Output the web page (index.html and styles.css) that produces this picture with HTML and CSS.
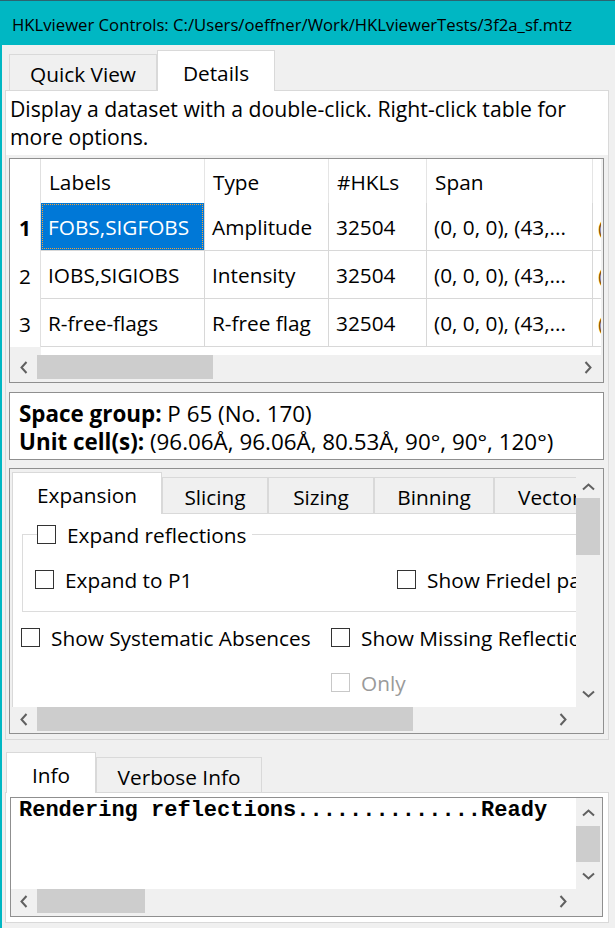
FILE: index.html
```html
<!DOCTYPE html>
<html>
<head>
<meta charset="utf-8">
<title>HKLviewer Controls</title>
<link rel="stylesheet" href="styles.css">
</head>
<body>
<div class="window">
  <div class="titlebar">HKLviewer Controls: C:/Users/oeffner/Work/HKLviewerTests/3f2a_sf.mtz</div>
  <div class="client">
    <div class="tabbar top-tabbar">
      <div class="tab tab-quick">Quick View</div>
      <div class="tab active tab-details">Details</div>
    </div>
    <div class="pane details-pane">
      <div class="desc">Display a dataset with a double-click. Right-click table for<br>more options.</div>
      <div class="lower">
        <div class="frame table-frame">
          <div class="table-view">
            <div class="trow thead">
              <div class="vh"></div>
              <div class="cell c-labels">Labels</div>
              <div class="cell c-type">Type</div>
              <div class="cell c-hkls">#HKLs</div>
              <div class="cell c-span">Span</div>
              <div class="cell c-more"></div>
            </div>
            <div class="trow tbody">
              <div class="vh bold">1</div>
              <div class="cell c-labels selected">FOBS,SIGFOBS</div>
              <div class="cell c-type">Amplitude</div>
              <div class="cell c-hkls">32504</div>
              <div class="cell c-span">(0, 0, 0), (43,...</div>
              <div class="cell c-more">(</div>
            </div>
            <div class="trow tbody">
              <div class="vh">2</div>
              <div class="cell c-labels">IOBS,SIGIOBS</div>
              <div class="cell c-type">Intensity</div>
              <div class="cell c-hkls">32504</div>
              <div class="cell c-span">(0, 0, 0), (43,...</div>
              <div class="cell c-more">(</div>
            </div>
            <div class="trow tbody">
              <div class="vh">3</div>
              <div class="cell c-labels">R-free-flags</div>
              <div class="cell c-type">R-free flag</div>
              <div class="cell c-hkls">32504</div>
              <div class="cell c-span">(0, 0, 0), (43,...</div>
              <div class="cell c-more">(</div>
            </div>
            <div class="trow tfill">
              <div class="vh vh-fill"></div>
            </div>
          </div>
          <div class="hscroll hs-table">
            <div class="sb-btn sb-left"><svg width="8" height="13" viewBox="0 0 8 13"><path d="M6.5 1 L1.5 6.5 L6.5 12" fill="none" stroke="#606060" stroke-width="2"/></svg></div>
            <div class="sb-track"><div class="sb-thumb thumb-table"></div></div>
            <div class="sb-btn sb-right"><svg width="8" height="13" viewBox="0 0 8 13"><path d="M1.5 1 L6.5 6.5 L1.5 12" fill="none" stroke="#606060" stroke-width="2"/></svg></div>
          </div>
        </div>

        <div class="frame sg-box">
          <div><b>Space group:</b> P 65 (No. 170)</div>
          <div><b>Unit cell(s):</b> (96.06Å, 96.06Å, 80.53Å, 90°, 90°, 120°)</div>
        </div>

        <div class="frame scroll-frame">
          <div class="viewport">
            <div class="inner-tabs">
              <div class="tabbar inner-tabbar">
                <div class="tab active t-exp">Expansion</div>
                <div class="tab t-sli">Slicing</div>
                <div class="tab t-siz">Sizing</div>
                <div class="tab t-bin">Binning</div>
                <div class="tab t-vec">Vectors</div>
              </div>
              <div class="inner-pane">
                <div class="groupbox">
                  <div class="gb-title">
                    <span class="cb"></span><span class="cb-label">Expand reflections</span>
                  </div>
                  <div class="gb-row">
                    <div class="check"><span class="cb"></span><span class="cb-label">Expand to P1</span></div>
                    <div class="check"><span class="cb"></span><span class="cb-label">Show Friedel pairs</span></div>
                  </div>
                </div>
                <div class="opt-grid">
                  <div class="check"><span class="cb"></span><span class="cb-label">Show Systematic Absences</span></div>
                  <div class="check"><span class="cb"></span><span class="cb-label">Show Missing Reflections</span></div>
                  <div></div>
                  <div class="check disabled"><span class="cb"></span><span class="cb-label">Only</span></div>
                </div>
              </div>
            </div>
          </div>
          <div class="vscroll vs-scroll">
            <div class="sb-btn sb-up"><svg width="13" height="8" viewBox="0 0 13 8"><path d="M1 6.5 L6.5 1.5 L12 6.5" fill="none" stroke="#606060" stroke-width="2"/></svg></div>
            <div class="sb-vtrack"><div class="sb-vthumb vthumb-scroll"></div></div>
            <div class="sb-btn sb-down"><svg width="13" height="8" viewBox="0 0 13 8"><path d="M1 1.5 L6.5 6.5 L12 1.5" fill="none" stroke="#606060" stroke-width="2"/></svg></div>
          </div>
          <div class="hscroll">
            <div class="sb-btn sb-left"><svg width="8" height="13" viewBox="0 0 8 13"><path d="M6.5 1 L1.5 6.5 L6.5 12" fill="none" stroke="#606060" stroke-width="2"/></svg></div>
            <div class="sb-track"><div class="sb-thumb thumb-scroll"></div></div>
            <div class="sb-btn sb-right"><svg width="8" height="13" viewBox="0 0 8 13"><path d="M1.5 1 L6.5 6.5 L1.5 12" fill="none" stroke="#606060" stroke-width="2"/></svg></div>
          </div>
          <div class="sb-corner"></div>
        </div>
      </div>
    </div>

    <div class="tabbar bottom-tabbar">
      <div class="tab active tab-info">Info</div>
      <div class="tab tab-verbose">Verbose Info</div>
    </div>
    <div class="pane info-pane">
      <div class="frame text-frame">
        <div class="textarea">Rendering reflections..............Ready</div>
        <div class="vscroll vs-info">
          <div class="sb-btn sb-up-info"><svg width="13" height="8" viewBox="0 0 13 8"><path d="M1 6.5 L6.5 1.5 L12 6.5" fill="none" stroke="#606060" stroke-width="2"/></svg></div>
          <div class="sb-vtrack"><div class="sb-vthumb vthumb-info"></div></div>
          <div class="sb-btn sb-down-info"><svg width="13" height="8" viewBox="0 0 13 8"><path d="M1 1.5 L6.5 6.5 L12 1.5" fill="none" stroke="#606060" stroke-width="2"/></svg></div>
        </div>
        <div class="hscroll">
          <div class="sb-btn sb-left sb-left-info"><svg width="8" height="13" viewBox="0 0 8 13"><path d="M6.5 1 L1.5 6.5 L6.5 12" fill="none" stroke="#606060" stroke-width="2"/></svg></div>
          <div class="sb-track"><div class="sb-thumb thumb-info"></div></div>
          <div class="sb-btn sb-right"><svg width="8" height="13" viewBox="0 0 8 13"><path d="M1.5 1 L6.5 6.5 L1.5 12" fill="none" stroke="#606060" stroke-width="2"/></svg></div>
        </div>
        <div class="sb-corner"></div>
      </div>
    </div>
  </div>
</div>
</body>
</html>
```

FILE: styles.css
```css
* { box-sizing: border-box; }
html, body { margin: 0; padding: 0; }
body {
  width: 615px;
  height: 928px;
  overflow: hidden;
  background: #f0f0f0;
  font-family: "Open Sans", "Noto Sans", sans-serif;
  font-size: 20.8px;
  color: #000;
}
.window {
  width: 615px;
  height: 928px;
  display: flex;
  flex-direction: column;
  overflow: hidden;
}
.titlebar {
  flex: none;
  height: 45px;
  background: #00b7c3;
  border-top: 1px solid #2b6470;
  padding: 2px 0 0 12px;
  font-size: 16.7px;
  display: flex;
  align-items: center;
  white-space: nowrap;
}
.client {
  flex: 1;
  border-left: 2px solid #00b7c3;
  padding: 5px 0 0 3px;
}

/* tabs */
.tabbar {
  display: flex;
  align-items: flex-end;
}
.tab {
  flex: none;
  display: flex;
  align-items: center;
  justify-content: center;
  padding-top: 3px;
  border: 1px solid #d9d9d9;
  border-bottom: none;
  background: #f0f0f0;
  white-space: nowrap;
}
.tab.active {
  background: #fff;
  position: relative;
  z-index: 1;
  margin-bottom: -1px;
}
.top-tabbar { height: 40px; padding-left: 4px; }
.tab-quick { width: 148px; height: 36px; }
.tab-details { width: 118px; height: 41px; }

.pane {
  width: 604px;
  border: 1px solid #d9d9d9;
  background: #fff;
}
.details-pane {
  height: 650px;
  display: flex;
  flex-direction: column;
}
.desc {
  flex: none;
  height: 64px;
  padding: 4px 0 4px 4px;
  font-size: 21.2px;
  line-height: 28px;
  white-space: nowrap;
}
.lower {
  flex: 1;
  background: #f0f0f0;
  padding: 3px 0 0 3px;
  display: flex;
  flex-direction: column;
}
.frame {
  flex: none;
  width: 595px;
  border: 1px solid #8f8f8f;
}

/* table */
.table-frame {
  height: 225px;
  background: #f0f0f0;
  display: flex;
  flex-direction: column;
}
.table-view {
  width: 591px;
  height: 196px;
  overflow: hidden;
  background: #fff;
}
.trow {
  display: flex;
  width: 700px;
}
.thead { height: 44px; }
.tbody { height: 48px; }
.tfill { height: 8px; }
.vh {
  flex: none;
  width: 31px;
  border-right: 1px solid #e0e0e0;
  display: flex;
  align-items: center;
  justify-content: center;
  padding-top: 2px;
}
.vh.bold { font-weight: 700; }
.vh-fill { background: #f0f0f0; border-right: none; }
.cell {
  flex: none;
  display: flex;
  align-items: center;
  padding-left: 7px;
  border-right: 1px solid #d8d8d8;
  white-space: nowrap;
  overflow: hidden;
  position: relative;
}
.tbody .cell { border-bottom: 1px solid #d8d8d8; }
.thead .cell { border-right-color: #e5e5e5; padding-left: 8px; padding-top: 2px; }
.c-labels { width: 164px; }
.c-type { width: 124px; }
.c-hkls { width: 98px; }
.c-span { width: 166px; }
.c-more { width: 120px; padding-left: 5px; border-right: none; }
.tbody .c-more { color: #8a5a00; }
.cell.selected {
  background: #0078d7;
  color: #fff;
}
.cell.selected::after {
  content: "";
  position: absolute;
  left: 1px;
  top: 1px;
  right: 1px;
  bottom: 1px;
  border: 1px dotted #f3a23a;
}

/* scrollbars */
.hscroll {
  display: flex;
  height: 24px;
  background: #f0f0f0;
}
.hs-table { width: 591px; }
.sb-btn {
  flex: none;
  display: flex;
  align-items: center;
  justify-content: center;
}
.sb-left { width: 27px; }
.sb-left-info { width: 26px; }
.sb-right { width: 26px; }
.sb-track { flex: 1; display: flex; }
.sb-thumb { height: 24px; background: #cdcdcd; }
.thumb-table { width: 176px; }
.thumb-scroll { width: 376px; }
.thumb-info { width: 108px; }

.vscroll {
  display: flex;
  flex-direction: column;
  background: #f0f0f0;
}
.sb-vtrack { flex: 1; }
.sb-vthumb { width: 24px; background: #cdcdcd; }
.sb-up { height: 29px; padding-top: 6px; }
.sb-down { height: 27px; }
.vthumb-scroll { height: 57px; }
.sb-up-info { height: 28px; padding-top: 2px; }
.sb-down-info { height: 27px; }
.vthumb-info { height: 36px; }
.sb-corner { background: #f0f0f0; }

/* space group */
.sg-box {
  height: 68px;
  margin-top: 9px;
  background: #fff;
  padding: 7px 0 0 9px;
  font-size: 22.4px;
  line-height: 28px;
  white-space: nowrap;
}

/* scroll area with inner tabs */
.scroll-frame {
  height: 266px;
  margin-top: 8px;
  background: #f0f0f0;
  display: grid;
  grid-template-columns: 566px 24px;
  grid-template-rows: 238px 24px;
}
.viewport {
  overflow: hidden;
  background: #f0f0f0;
  padding: 3px 0 0 2px;
}
.inner-tabs { width: 680px; }
.inner-tabbar { height: 41px; }
.t-exp { width: 150px; height: 42px; }
.t-sli { width: 106px; height: 36px; }
.t-siz { width: 106px; height: 36px; }
.t-bin { width: 120px; height: 36px; }
.t-vec { width: 120px; height: 36px; justify-content: flex-start; padding-left: 23px; }
.inner-pane {
  border: 1px solid #d9d9d9;
  background: #fff;
  height: 260px;
  padding: 10px 0 0 8px;
}
.groupbox {
  position: relative;
  margin: 10px 0 0 1px;
  width: 640px;
  height: 78px;
  border: 1px solid #dcdcdc;
}
.gb-title {
  position: absolute;
  left: 14px;
  top: -11px;
  height: 20px;
  display: flex;
  align-items: center;
  gap: 11px;
  padding-right: 5px;
  background: #fff;
  white-space: nowrap;
}
.gb-row {
  display: grid;
  grid-template-columns: 362px auto;
  padding: 35px 0 0 12px;
}
.check {
  display: flex;
  align-items: center;
  gap: 11px;
  height: 19px;
  white-space: nowrap;
}
.cb {
  flex: none;
  width: 19px;
  height: 19px;
  border: 1px solid #333;
  background: #fff;
}
.cb-label { padding-top: 2px; line-height: 19px; }
.opt-grid {
  display: grid;
  grid-template-columns: 310px auto;
  row-gap: 26px;
  margin-top: 16px;
}
.check.disabled { color: #9a9a9a; }
.check.disabled .cb { border-color: #c8c8c8; }

/* bottom tabs */
.bottom-tabbar { height: 40px; margin-top: 12px; padding-left: 1px; }
.tab-info { width: 90px; height: 41px; }
.tab-verbose { width: 166px; height: 35px; }
.info-pane {
  height: 131px;
  padding: 4px 0 0 4px;
}
.text-frame {
  width: 593px;
  height: 120px;
  background: #f0f0f0;
  display: grid;
  grid-template-columns: 565px 24px;
  grid-template-rows: 91px 24px;
}
.textarea {
  background: #fff;
  padding: 1px 0 0 8px;
  font-family: "Liberation Mono", "Courier New", monospace;
  font-weight: 700;
  font-size: 22px;
  line-height: 24px;
  white-space: pre;
  overflow: hidden;
}
```
